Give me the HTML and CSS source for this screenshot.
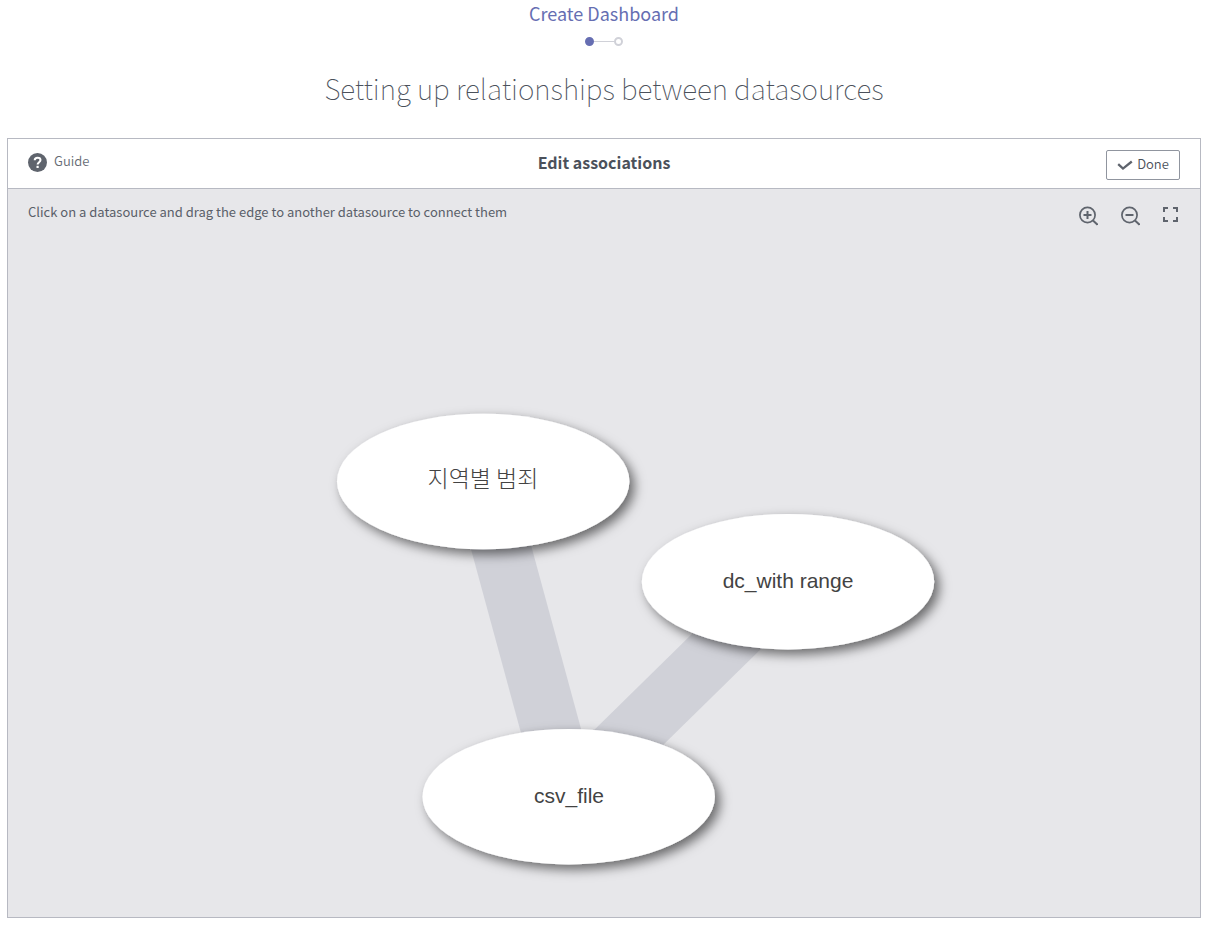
FILE: index.html
```html
<!DOCTYPE html>
<html lang="en">
<head>
<meta charset="utf-8">
<title>Create Dashboard</title>
<link rel="stylesheet" href="styles.css">
</head>
<body>
<header class="page-head">
  <p class="page-name">Create Dashboard</p>
  <div class="steps">
    <span class="step step-active"></span><span class="step-line"></span><span class="step"></span>
  </div>
  <h1 class="page-title">Setting up relationships between datasources</h1>
</header>
<main class="panel">
  <div class="panel-bar">
    <a class="guide" href="#">
      <svg class="guide-icon" viewBox="0 0 19 19" width="19" height="19" aria-hidden="true">
        <circle cx="9.5" cy="9.5" r="9.5" fill="#5f646d"/>
        <path d="M6.7 7.3C6.7 5.5 8 4.7 9.6 4.7c1.700 0 2.900.9 2.900 2.400 0 2-2.900 2.200-2.900 4.500" fill="none" stroke="#fff" stroke-width="2"/>
        <rect x="8.500" y="12.800" width="2.200" height="2.200" fill="#fff"/>
      </svg>
      <span>Guide</span>
    </a>
    <h2 class="panel-title">Edit associations</h2>
    <button class="done" type="button">
      <svg viewBox="0 0 16 12" width="16" height="12" aria-hidden="true"><path d="M1.200 5.200 6 9.600 14.800 2.500" fill="none" stroke="#5f646d" stroke-width="2.300"/></svg>
      <span>Done</span>
    </button>
  </div>
  <section class="canvas">
    <svg class="graph" viewBox="0 0 1192 728" role="img" aria-label="Datasource associations">
      <defs>
        <filter id="shadow" x="-10%" y="-20%" width="125%" height="150%">
          <feDropShadow dx="5" dy="5" stdDeviation="6" flood-color="#000" flood-opacity="0.55"/>
        </filter>
      </defs>
      <line class="edge" x1="475" y1="292" x2="561" y2="608"/>
      <line class="edge" x1="780" y1="392" x2="560" y2="608"/>
      <g filter="url(#shadow)"><ellipse class="node" cx="475.200" cy="292.500" rx="146.200" ry="67.700"/></g>
      <g filter="url(#shadow)"><ellipse class="node" cx="780" cy="392.700" rx="146.200" ry="67.700"/></g>
      <g filter="url(#shadow)"><ellipse class="node" cx="560.700" cy="607.700" rx="146.200" ry="67.700"/></g>
      <text class="label label-ko" x="475" y="298">지역별 범죄</text>
      <text class="label" x="780" y="399">dc_with range</text>
      <text class="label" x="561" y="614">csv_file</text>
    </svg>
    <div class="canvas-head">
      <p class="hint">Click on a datasource and drag the edge to another datasource to connect them</p>
      <div class="tools">
        <button class="tool" type="button" aria-label="Zoom in">
          <svg viewBox="0 0 20 20" width="20" height="20"><g fill="none" stroke="#5f646d"><circle cx="9.500" cy="9" r="7.600" stroke-width="1.700"/><path d="M15 14.500 19.500 18.700" stroke-width="1.900"/><path d="M5.500 9H13.500M9.500 5V13" stroke-width="2"/></g></svg>
        </button>
        <button class="tool" type="button" aria-label="Zoom out">
          <svg viewBox="0 0 20 20" width="20" height="20"><g fill="none" stroke="#5f646d"><circle cx="9.500" cy="9" r="7.600" stroke-width="1.700"/><path d="M15 14.500 19.500 18.700" stroke-width="1.900"/><path d="M5.500 9H13.500" stroke-width="2"/></g></svg>
        </button>
        <button class="tool" type="button" aria-label="Full screen">
          <svg viewBox="0 0 16 20" width="16" height="20"><path d="M2 6V2H6M11 2H15V6M15 11V15H11M6 15H2V11" fill="none" stroke="#5f646d" stroke-width="2"/></svg>
        </button>
      </div>
    </div>
  </section>
</main>
</body>
</html>
```

FILE: styles.css
```css
* { box-sizing: border-box; }

body {
  display: flex;
  flex-direction: column;
  min-height: 100vh;
  margin: 0;
  padding: 0 9px 12px 7px;
  background: #fff;
  color: #4b515b;
  font-family: "Noto Sans CJK KR", "Liberation Sans", sans-serif;
}

p, h1, h2 { margin: 0; }

.page-head {
  display: flex;
  flex-direction: column;
  align-items: center;
  padding-bottom: 28px;
}

.page-name {
  color: #666eb2;
  font-size: 18px;
  line-height: 26px;
}

.steps {
  display: flex;
  align-items: center;
  height: 31px;
}

.step {
  width: 9px;
  height: 9px;
  border: 2px solid #d0d1d8;
  border-radius: 50%;
}

.step-active {
  border-color: #666eb2;
  background: #666eb2;
}

.step-line {
  width: 20px;
  height: 1px;
  background: #d0d1d8;
}

.page-title {
  margin-top: 9px;
  color: #4b515b;
  font-size: 28px;
  font-weight: 100;
  line-height: 44px;
}

.panel {
  display: flex;
  flex: 1;
  flex-direction: column;
  border: 1px solid #b7b9c2;
}

.panel-bar {
  display: grid;
  grid-template-columns: 1fr auto 1fr;
  align-items: center;
  height: 50px;
  padding: 0 20px 3px;
  border-bottom: 1px solid #b7b9c2;
}

.guide {
  display: flex;
  align-items: center;
  justify-self: start;
  gap: 7px;
  color: #666b74;
  font-size: 13px;
  font-weight: 350;
  line-height: 20px;
  text-decoration: none;
}

.guide span { padding-bottom: 2px; }

.panel-title {
  font-size: 16px;
  font-weight: 700;
  line-height: 24px;
}

.done {
  display: flex;
  align-items: center;
  justify-content: center;
  justify-self: end;
  gap: 4px;
  width: 74px;
  height: 30px;
  margin-top: 6px;
  padding: 0 0 3px;
  border: 1px solid #90959f;
  border-radius: 2px;
  background: #fff;
  color: #4b515b;
  font: inherit;
  font-size: 13px;
  font-weight: 350;
}

.done svg { margin-top: 3px; }

.canvas {
  position: relative;
  flex: 1;
  background: #e7e7ea;
}

.graph {
  position: absolute;
  inset: 0;
  width: 100%;
  height: 100%;
}

.edge {
  stroke: #d0d1d8;
  stroke-width: 59;
}

.node { fill: #fff; }

.label {
  fill: #434343;
  font-family: "Liberation Sans", sans-serif;
  font-size: 21px;
  text-anchor: middle;
}

.label-ko {
  font-family: "Noto Sans CJK KR", sans-serif;
  font-size: 23px;
  font-weight: 300;
}

.canvas-head {
  position: relative;
  display: flex;
  justify-content: space-between;
  padding: 13px 22px 0 20px;
}

.hint {
  color: #5a5f69;
  font-size: 13px;
  font-weight: 400;
  line-height: 20px;
}

.tools {
  display: flex;
  gap: 22px;
  padding-top: 4px;
}

.tool {
  display: flex;
  padding: 0;
  border: 0;
  background: none;
}
```
